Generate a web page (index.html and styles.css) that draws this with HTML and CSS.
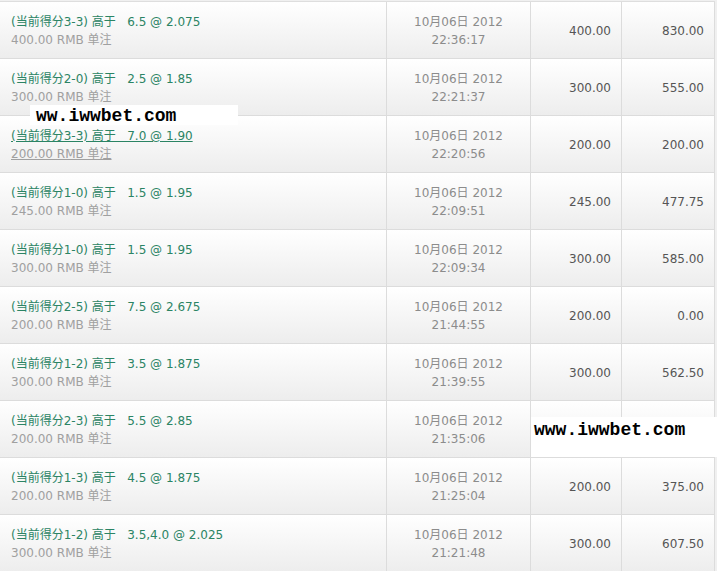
FILE: index.html
```html
<!DOCTYPE html>
<html>
<head>
<meta charset="utf-8">
<link rel="stylesheet" href="styles.css">
</head>
<body>
<div class="page">
  <div class="table">
    <div class="row">
      <div class="cell bet"><div class="sel">(当前得分3-3) 高于   6.5 @ 2.075</div><div class="stake">400.00 RMB 单注</div></div>
      <div class="cell date"><div>10月06日 2012</div><div>22:36:17</div></div>
      <div class="cell num">400.00</div>
      <div class="cell num">830.00</div>
    </div>
    <div class="row">
      <div class="cell bet"><div class="sel">(当前得分2-0) 高于   2.5 @ 1.85</div><div class="stake">300.00 RMB 单注</div></div>
      <div class="cell date"><div>10月06日 2012</div><div>22:21:37</div></div>
      <div class="cell num">300.00</div>
      <div class="cell num">555.00</div>
    </div>
    <div class="row hover">
      <div class="cell bet"><div class="sel">(当前得分3-3) 高于   7.0 @ 1.90</div><div class="stake">200.00 RMB 单注</div></div>
      <div class="cell date"><div>10月06日 2012</div><div>22:20:56</div></div>
      <div class="cell num">200.00</div>
      <div class="cell num">200.00</div>
    </div>
    <div class="row">
      <div class="cell bet"><div class="sel">(当前得分1-0) 高于   1.5 @ 1.95</div><div class="stake">245.00 RMB 单注</div></div>
      <div class="cell date"><div>10月06日 2012</div><div>22:09:51</div></div>
      <div class="cell num">245.00</div>
      <div class="cell num">477.75</div>
    </div>
    <div class="row">
      <div class="cell bet"><div class="sel">(当前得分1-0) 高于   1.5 @ 1.95</div><div class="stake">300.00 RMB 单注</div></div>
      <div class="cell date"><div>10月06日 2012</div><div>22:09:34</div></div>
      <div class="cell num">300.00</div>
      <div class="cell num">585.00</div>
    </div>
    <div class="row">
      <div class="cell bet"><div class="sel">(当前得分2-5) 高于   7.5 @ 2.675</div><div class="stake">200.00 RMB 单注</div></div>
      <div class="cell date"><div>10月06日 2012</div><div>21:44:55</div></div>
      <div class="cell num">200.00</div>
      <div class="cell num">0.00</div>
    </div>
    <div class="row">
      <div class="cell bet"><div class="sel">(当前得分1-2) 高于   3.5 @ 1.875</div><div class="stake">300.00 RMB 单注</div></div>
      <div class="cell date"><div>10月06日 2012</div><div>21:39:55</div></div>
      <div class="cell num">300.00</div>
      <div class="cell num">562.50</div>
    </div>
    <div class="row">
      <div class="cell bet"><div class="sel">(当前得分2-3) 高于   5.5 @ 2.85</div><div class="stake">200.00 RMB 单注</div></div>
      <div class="cell date"><div>10月06日 2012</div><div>21:35:06</div></div>
      <div class="cell num"></div>
      <div class="cell num"></div>
    </div>
    <div class="row">
      <div class="cell bet"><div class="sel">(当前得分1-3) 高于   4.5 @ 1.875</div><div class="stake">200.00 RMB 单注</div></div>
      <div class="cell date"><div>10月06日 2012</div><div>21:25:04</div></div>
      <div class="cell num">200.00</div>
      <div class="cell num">375.00</div>
    </div>
    <div class="row">
      <div class="cell bet"><div class="sel">(当前得分1-2) 高于   3.5,4.0 @ 2.025</div><div class="stake">300.00 RMB 单注</div></div>
      <div class="cell date"><div>10月06日 2012</div><div>21:21:48</div></div>
      <div class="cell num">300.00</div>
      <div class="cell num">607.50</div>
    </div>
  </div>
  <div class="mark mark-a">ww.iwwbet.com</div>
  <div class="mark mark-b">www.iwwbet.com</div>
</div>
</body>
</html>
```

FILE: styles.css
```css
html, body {
  margin: 0;
  padding: 0;
  background: #f0f0f0;
  overflow: hidden;
}

.page {
  position: relative;
  width: 717px;
  height: 571px;
  overflow: hidden;
  font-family: "DejaVu Sans", "Noto Sans CJK SC", sans-serif;
  font-size: 12px;
}

.table {
  margin-top: 1px;
  border-top: 1px solid #dedede;
  width: 715px;
}

.row {
  display: grid;
  grid-template-columns: 387px 144px 91px 93px;
  height: 56px;
  border-bottom: 1px solid #dcdcdc;
}

.cell {
  border-right: 1px solid #dcdcdc;
  background: linear-gradient(#ffffff, #ededed);
  line-height: 18px;
  padding: 11px 0 0;
  box-sizing: border-box;
}

.bet {
  padding-left: 11px;
}

.sel {
  color: #2b8464;
  white-space: pre;
}

.stake {
  color: #a0a0a0;
}

.hover .sel,
.hover .stake {
  text-decoration: underline;
}

.date {
  text-align: center;
  color: #8c8c8c;
}

.num {
  display: flex;
  align-items: center;
  justify-content: flex-end;
  padding: 2px 10px 0 0;
  color: #555555;
}

.mark {
  position: absolute;
  background: #ffffff;
  color: #000000;
  font-family: "Liberation Mono", monospace;
  font-weight: bold;
  font-size: 18px;
  line-height: 20px;
  box-sizing: border-box;
}

.mark-a {
  left: 30px;
  top: 105px;
  width: 208px;
  height: 20px;
  padding: 1px 0 0 6px;
}

.mark-b {
  left: 531px;
  top: 417px;
  width: 186px;
  height: 40px;
  padding: 3px 0 0 3px;
}
```
